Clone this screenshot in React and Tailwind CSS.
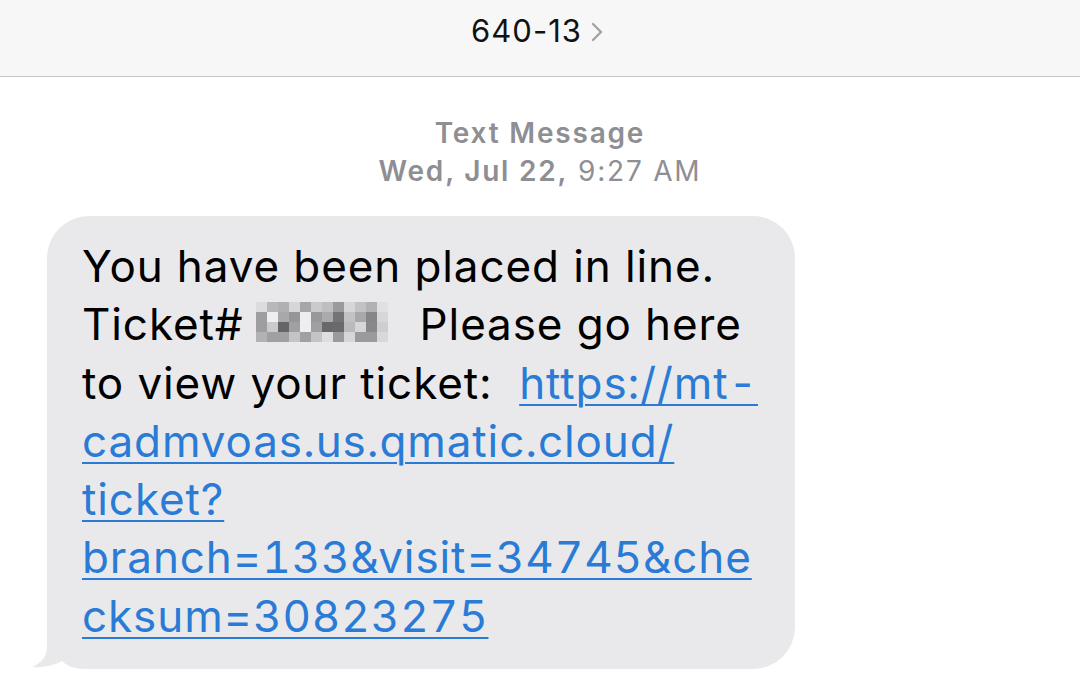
import React from 'react';

// Pixelated (redacted) ticket number, 12 x 4 cells
const mosaic = [
  ['#dcdcde', '#b8b8ba', '#b0b0b2', '#d6d6d8', '#a6a6a8', '#cacacc', '#bebec0', '#9a9a9c', '#d6d6d8', '#c2c2c4', '#b2b2b4', '#e0e0e2'],
  ['#9e9ea0', '#eeeef0', '#a8a8aa', '#969698', '#eeeef0', '#98989a', '#aaaaac', '#747476', '#c2c2c4', '#a8a8aa', '#868688', '#d6d6d8'],
  ['#9e9ea0', '#cacacc', '#656567', '#a0a0a2', '#eeeef0', '#a0a0a2', '#68686a', '#6a6a6c', '#bababc', '#d6d6d8', '#88888a', '#cecece'],
  ['#b2b2b4', '#a0a0a2', '#a0a0a2', '#c4c4c6', '#a0a0a2', '#c4c4c6', '#dedee0', '#9a9a9c', '#d6d6d8', '#9a9a9c', '#9a9a9c', '#d8d8da'],
];

const Redacted = () => (
  <span className="inline-block overflow-hidden h-[40px] w-[132px] align-[-2px] ml-[12px] mr-[32px]">
    <span className="grid grid-cols-[repeat(12,11px)] grid-rows-[repeat(4,10px)]">
      {mosaic.flat().map((c, i) => (
        <span key={i} style={{ backgroundColor: c }} />
      ))}
    </span>
  </span>
);

const Link = ({ children }) => (
  <span className="text-[#2a7bd6] underline decoration-[2px] underline-offset-[5px] tabular-nums">{children}</span>
);

export default function App() {
  return (
    <div className="w-[1080px] h-[684px] bg-white overflow-hidden font-['Inter',sans-serif]">
      {/* Header */}
      <div className="h-[77px] bg-[#f7f7f7] border-b border-[#c6c6c8] flex items-start justify-center pt-[8px]">
        <div className="flex items-center gap-[9px] mr-[6px]">
          <span className="text-[31px] text-[#111] tracking-[1px]">640-13</span>
          <svg width="12" height="22" viewBox="0 0 12 22" className="mt-[2px]">
            <path d="M2 3 L10 11 L2 19" fill="none" stroke="#a2a2a6" strokeWidth="2.4" strokeLinecap="round" strokeLinejoin="round" />
          </svg>
        </div>
      </div>

      {/* Timestamp */}
      <div className="flex flex-col items-center mt-[37px] text-[#8e8e93] text-[28px] leading-[38px] tracking-[1.8px]">
        <span className="font-semibold">Text Message</span>
        <span><span className="font-semibold">Wed, Jul 22,</span> 9:27 AM</span>
      </div>

      {/* Bubble */}
      <div className="relative ml-[47px] mt-[26px] w-[748px]">
        {/* tail, painted under the bubble */}
        <svg width="60" height="40" viewBox="0 0 60 40" className="absolute left-[-16px] bottom-0">
          <path d="M16 0 L16 18 C16 28 10 34 1 38 C10 39 22 37 31 32 C36 37 42 40 56 40 L60 40 L60 0 Z" fill="#e9e9eb" />
        </svg>
        <div className="relative bg-[#e9e9eb] rounded-[42px] pl-[35px] pr-[20px] pt-[21px] pb-[24px] text-[44px] leading-[58.3px] tracking-[0.9px] text-black whitespace-nowrap">
          <div>You have been placed in line.</div>
          <div>Ticket#<Redacted />Please go here</div>
          <div>to view your ticket:&nbsp;&nbsp;<Link>https://mt-</Link></div>
          <div><Link>cadmvoas.us.qmatic.cloud/</Link></div>
          <div><Link>ticket?</Link></div>
          <div><Link>branch=133&amp;visit=34745&amp;che</Link></div>
          <div><Link>cksum=30823275</Link></div>
        </div>
      </div>
    </div>
  );
}
